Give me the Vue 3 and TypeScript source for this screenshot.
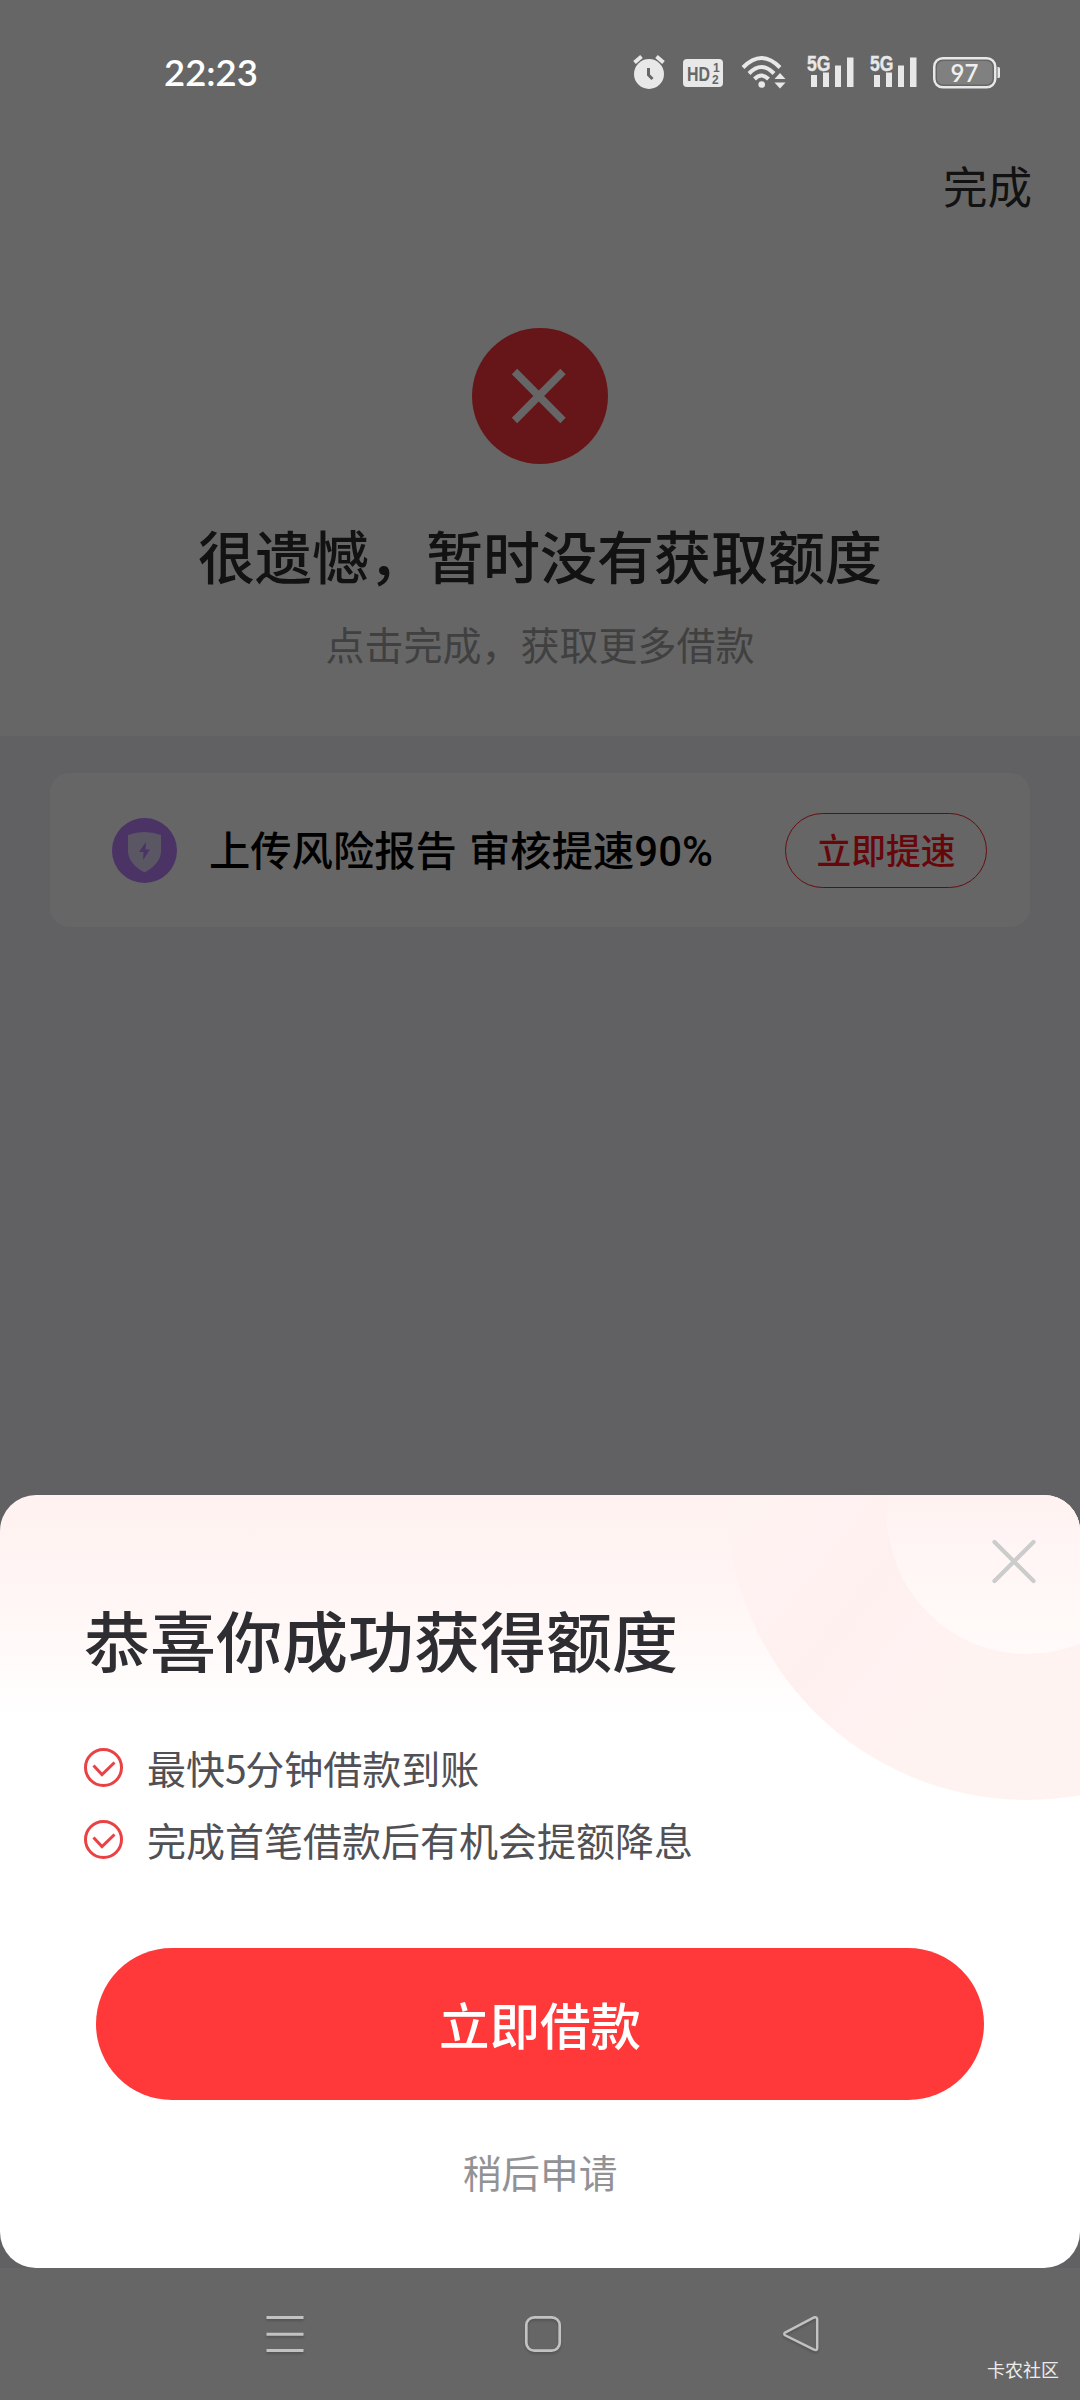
<script setup lang="ts">
interface Benefit {
  before: string
  digit: string
  after: string
}

const benefits: Benefit[] = [
  { before: '最快', digit: '5', after: '分钟借款到账' },
  { before: '完成首笔借款后有机会提额降息', digit: '', after: '' },
]

const simCards: number[] = [1, 2]
</script>

<template>
  <div class="screen">
    <main class="page">
      <header class="topbar">
        <span class="done">完成</span>
      </header>
      <section class="result">
        <svg class="fail" width="136" height="136" viewBox="0 0 136 136">
          <circle cx="68" cy="68" r="68" fill="#ff373c" />
          <path d="M42.500 43.500L91 92.500M91 43.500L42.500 92.500" stroke="#fff" stroke-width="7.500" />
        </svg>
        <h1>很遗憾，暂时没有获取额度</h1>
        <p>点击完成，获取更多借款</p>
      </section>
      <section class="offers">
        <div class="card">
          <svg width="65" height="65" viewBox="0 0 65 65">
            <circle cx="32.500" cy="32.500" r="32.500" fill="#bb7fff" />
            <path d="M16 17Q32 11 49 17V34Q48 46 32.500 54.500Q17 46 16 34Z" fill="#e2d8f8" />
            <path d="M34 24L27 34H31.500L31 42L38 31.500H33.500Z" fill="#bb7fff" />
          </svg>
          <span class="card-text">上传风险报告 审核提速<b>90%</b></span>
          <span class="card-btn">立即提速</span>
        </div>
      </section>
      <div class="nav-bg"></div>
    </main>

    <div class="overlay">
      <div class="status">
        <span class="time">22:23</span>
        <div class="icons">
          <svg class="alarm" width="34" height="36" viewBox="0 0 34 36">
            <circle cx="17" cy="20" r="15" fill="#e8e8e8" />
            <path d="M2.500 8.500L9.500 2.500M31.500 8.500L24.500 2.500" stroke="#e8e8e8" stroke-width="4" />
            <path d="M16.500 14V21L20.500 25" fill="none" stroke="#666" stroke-width="3" />
          </svg>
          <svg class="hd" width="40" height="28" viewBox="0 0 40 28">
            <rect width="40" height="28" rx="4" fill="#e8e8e8" />
            <text x="4" y="22" class="hd-text" textLength="23" lengthAdjust="spacingAndGlyphs">HD</text>
            <text x="30" y="13" class="hd-num">1</text>
            <text x="29" y="25" class="hd-num">2</text>
          </svg>
          <svg class="wifi" width="46" height="36" viewBox="0 0 46 36">
            <g fill="none" stroke="#e8e8e8" stroke-width="4">
              <path d="M2 13.500Q20.500 -5.500 39 13.500" />
              <path d="M8 19.500Q20.500 6.500 33 19.500" />
              <path d="M13.500 25Q20.500 18 27.500 25" />
            </g>
            <circle cx="20.700" cy="30.500" r="3.300" fill="#e8e8e8" />
            <path d="M39 19L44.500 25H33.500ZM39 34.500L44.500 28.500H33.500Z" fill="#e8e8e8" />
          </svg>
          <svg v-for="sim in simCards" :key="sim" class="signal" width="48" height="38" viewBox="0 0 48 38">
            <text x="0" y="21" class="g-text" textLength="23.500" lengthAdjust="spacingAndGlyphs">5G</text>
            <path d="M4 25h6v12h-6zM16 22.500h6v14.500h-6zM28 15.500h6v21.500h-6zM40 7.500h6.500v29.500h-6.500z" fill="#e8e8e8" />
          </svg>
          <svg class="battery" width="68" height="32" viewBox="0 0 68 32">
            <rect x="1.250" y="1.250" width="61" height="29" rx="8.500" fill="none" stroke="#e8e8e8" stroke-width="2.500" />
            <rect x="4" y="4" width="55.500" height="23.500" rx="6" fill="#808080" />
            <path d="M64.500 10h1q1.500 0 1.500 1.500v8q0 1.500 -1.500 1.500h-1z" fill="#e8e8e8" />
            <text x="31.500" y="24.500" text-anchor="middle" class="bat-text">97</text>
          </svg>
        </div>
      </div>

      <div class="sheet">
        <svg class="rings" width="353" height="306" viewBox="0 0 353 306">
          <defs>
            <linearGradient id="ring" gradientUnits="userSpaceOnUse" x1="0" y1="60" x2="300" y2="300">
              <stop offset="0" stop-color="#fff3f2" />
              <stop offset="0.350" stop-color="#fff0f0" />
              <stop offset="0.650" stop-color="#fff3f2" />
              <stop offset="1" stop-color="#fff3f2" />
            </linearGradient>
            <linearGradient id="core" x1="0" y1="0" x2="0" y2="1">
              <stop offset="0.400" stop-color="#fff2f1" />
              <stop offset="1" stop-color="#fffbfa" />
            </linearGradient>
          </defs>
          <circle cx="300" cy="5" r="300" fill="url(#ring)" />
          <circle cx="300" cy="19" r="140" fill="url(#core)" />
        </svg>
        <svg class="close" width="50" height="50" viewBox="0 0 50 50">
          <path d="M5.500 6L44.500 45M44.500 6L5.500 45" stroke="#ccc" stroke-width="4.200" stroke-linecap="round" />
        </svg>
        <h2>恭喜你成功获得额度</h2>
        <ul>
          <li v-for="b in benefits" :key="b.before">
            <svg width="39" height="39" viewBox="0 0 39 39" fill="none" stroke="#ea4144" stroke-width="3">
              <circle cx="19.500" cy="19.500" r="18" />
              <path d="M9.500 17.500L18 26.500L30.500 14.500" />
            </svg>
            <span>{{ b.before }}<i>{{ b.digit }}</i>{{ b.after }}</span>
          </li>
        </ul>
        <div class="primary">立即借款</div>
        <div class="later">稍后申请</div>
      </div>

      <nav class="navbar">
        <svg width="42" height="42" viewBox="0 0 42 42">
          <path d="M2.500 4.500H39.500M2.500 21.200H39.500M2.500 37.500H39.500" stroke="#c2c2c2" stroke-width="3" />
        </svg>
        <svg width="42" height="42" viewBox="0 0 42 42">
          <rect x="4.300" y="4.300" width="33.400" height="33.400" rx="8" fill="none" stroke="#c2c2c2" stroke-width="2.700" />
        </svg>
        <svg width="42" height="42" viewBox="0 0 42 42">
          <path d="M5.500 19.300L34 4.500Q37.200 3.500 37.200 6.500V35Q37.200 38 34 36.700L5.500 22.500Q3 20.900 5.500 19.300Z" fill="none" stroke="#c2c2c2" stroke-width="2.500" />
        </svg>
      </nav>
      <span class="mark">卡农社区</span>
    </div>
  </div>
</template>

<style>
body {
  margin: 0;
  background: #fff;
}
</style>

<style scoped>
.screen {
  position: relative;
  width: 1080px;
  height: 2400px;
  overflow: hidden;
  font-family: "Noto Sans CJK SC", sans-serif;
}
.page {
  display: flex;
  flex-direction: column;
  height: 2400px;
  background: #fff;
}
.topbar {
  display: flex;
  justify-content: flex-end;
  box-sizing: border-box;
  padding: 150px 48px 0 0;
  height: 328px;
}
.done {
  font-size: 44.500px;
  line-height: 70px;
  color: #2d2d2d;
}
.result {
  display: flex;
  flex-direction: column;
  align-items: center;
  height: 408px;
}
.fail {
  flex: none;
}
h1 {
  margin: 50px 0 0;
  font-size: 57px;
  font-weight: 500;
  line-height: 80px;
  color: #2d2d2d;
  white-space: nowrap;
}
.result p {
  margin: 19px 0 0;
  font-size: 39px;
  line-height: 60px;
  color: #a0a0a0;
}
.offers {
  flex: 1;
  padding: 37px 50px 0;
  background: #f3f3f7;
}
.card {
  display: flex;
  align-items: center;
  height: 154px;
  padding: 0 43px 0 62px;
  box-sizing: border-box;
  border-radius: 20px;
  background: #fff;
}
.card-text {
  flex: 1;
  margin: 0 0 0 32px;
  font-size: 41.300px;
  font-weight: 500;
  line-height: 60px;
  word-spacing: 3px;
  color: #000;
  white-space: nowrap;
}
.card-text b {
  font-family: Roboto, sans-serif;
  font-size: 42px;
  font-weight: 500;
}
.card-btn {
  box-sizing: border-box;
  width: 202px;
  height: 75px;
  border: 1px solid #ff2028;
  border-radius: 38px;
  font-size: 34.700px;
  font-weight: 500;
  line-height: 71px;
  text-align: center;
  color: #ff151c;
}
.nav-bg {
  height: 132px;
  background: #fff;
}
.overlay {
  position: absolute;
  inset: 0;
  display: flex;
  flex-direction: column;
  background: rgba(0, 0, 0, 0.6);
}
.status {
  display: flex;
  justify-content: space-between;
  box-sizing: border-box;
  height: 1495px;
  padding: 49px 79px 0 164px;
}
.time {
  font-family: Lato, sans-serif;
  font-size: 36.500px;
  font-weight: 600;
  line-height: 46px;
  color: #fff;
}
.icons {
  display: flex;
  align-items: flex-start;
}
.icons svg {
  flex: none;
}
.alarm {
  margin-top: 5px;
}
.hd {
  margin: 10px 0 0 17px;
}
.wifi {
  margin: 5px 0 0 18px;
}
.signal {
  margin: 1px 0 0 20px;
}
.signal + .signal {
  margin-left: 15px;
}
.battery {
  margin: 8px 0 0 15px;
}
.hd-text {
  font: bold 21px "Liberation Sans", sans-serif;
  fill: #666;
}
.hd-num {
  font: bold 12px "Liberation Sans", sans-serif;
  fill: #666;
}
.g-text {
  font: bold 22px "Liberation Sans", sans-serif;
  fill: #e8e8e8;
  stroke: #e8e8e8;
  stroke-width: 0.4px;
}
.bat-text {
  font: 600 24px Lato, sans-serif;
  fill: #efefef;
}
.sheet {
  position: relative;
  box-sizing: border-box;
  height: 773px;
  padding: 97px 84px 0;
  border-radius: 36px;
  overflow: hidden;
  background: linear-gradient(#fff2f1 0, #fff5f4 90px, #fff 225px);
}
.rings {
  position: absolute;
  top: 0;
  right: 0;
}
.close {
  position: absolute;
  top: 41px;
  right: 41px;
}
h2 {
  position: relative;
  margin: 0;
  font-size: 66px;
  font-weight: 500;
  line-height: 92px;
  color: #2e2d31;
}
ul {
  display: flex;
  flex-direction: column;
  margin: 47px 0 0;
  padding: 0;
  list-style: none;
}
li {
  display: flex;
  align-items: center;
  height: 72px;
}
li span {
  margin-left: 24px;
  font-size: 39px;
  line-height: 60px;
  color: #505055;
}
li i {
  font-style: normal;
  letter-spacing: -1.500px;
}
.primary {
  margin: 73px 12px 0;
  height: 152px;
  border-radius: 76px;
  background: #ff3939;
  color: #fff;
  font-size: 50.500px;
  font-weight: 500;
  line-height: 151px;
  text-align: center;
}
.later {
  margin-top: 41px;
  font-size: 38.700px;
  line-height: 60px;
  text-align: center;
  color: #929295;
}
.navbar {
  display: flex;
  justify-content: space-between;
  margin: 45px 258px 0 264px;
}
.navbar svg {
  filter: drop-shadow(0 2px 1px rgba(0, 0, 0, 0.18));
}
.mark {
  align-self: flex-end;
  margin: 1px 21px 0 0;
  font-size: 18px;
  line-height: 26px;
  color: #ececec;
}
</style>
